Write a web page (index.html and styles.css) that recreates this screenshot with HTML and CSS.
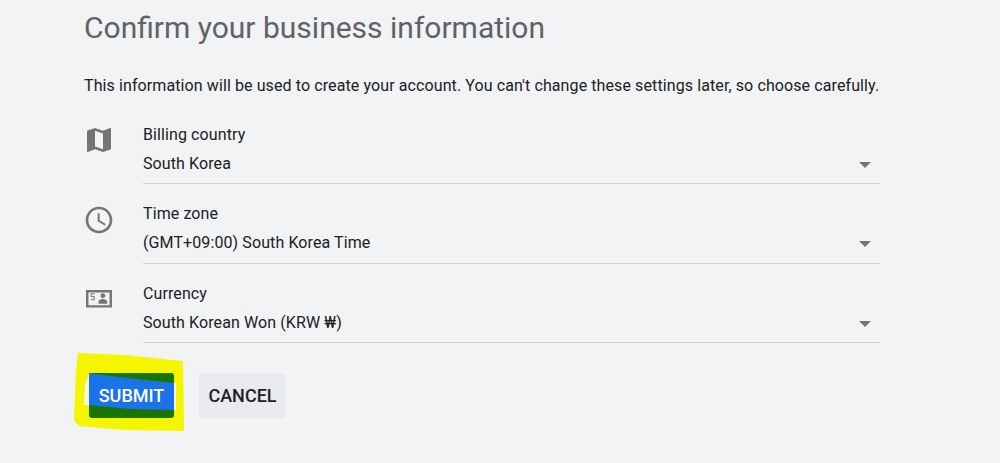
FILE: index.html
```html
<!DOCTYPE html>
<html lang="en">
<head>
<meta charset="utf-8">
<title>Confirm your business information</title>
<link rel="stylesheet" href="styles.css">
</head>
<body>
<main class="page">
  <h1 class="title">Confirm your business information</h1>
  <p class="intro">This information will be used to create your account. You can't change these settings later, so choose carefully.</p>
  <div class="rows">
    <div class="row">
      <svg class="icon" viewBox="0 0 24 24"><path d="M20.5 3l-.16.03L15 5.1 9 3 3.36 4.9c-.21.07-.36.25-.36.48V20.5c0 .28.22.5.5.5l.16-.03L9 18.9l6 2.1 5.64-1.9c.21-.07.36-.25.36-.48V3.5c0-.28-.22-.5-.5-.5zM15 19l-6-2.11V5l6 2.11V19z"/></svg>
      <div class="field">
        <div class="label">Billing country</div>
        <div class="value"><span>South Korea</span><i class="caret"></i></div>
      </div>
    </div>
    <div class="row">
      <svg class="icon" viewBox="0 0 24 24"><path d="M11.99 2C6.47 2 2 6.48 2 12s4.47 10 9.99 10C17.52 22 22 17.52 22 12S17.52 2 11.99 2zM12 20c-4.42 0-8-3.58-8-8s3.58-8 8-8 8 3.58 8 8-3.58 8-8 8zm.5-13H11v6l5.25 3.15.75-1.23-4.5-2.67z"/></svg>
      <div class="field">
        <div class="label">Time zone</div>
        <div class="value"><span>(GMT+09:00) South Korea Time</span><i class="caret"></i></div>
      </div>
    </div>
    <div class="row">
      <svg class="icon" viewBox="0 0 24 24"><path fill-rule="evenodd" d="M2.25 5.25h19.5v13.2H2.25zM4.1 7.1v9.5h15.8V7.1z"/><circle cx="14.9" cy="9.5" r="1.8"/><path d="M11.6 15.6v-1.5c0-1.4 2.2-2.1 3.3-2.1s3.3.7 3.3 2.1v1.5z"/><path class="icon-thin" d="M8.6 8.2H6.1v2h2.3v2.3H5.9"/></svg>
      <div class="field">
        <div class="label">Currency</div>
        <div class="value"><span>South Korean Won (KRW ₩)</span><i class="caret"></i></div>
      </div>
    </div>
  </div>
  <div class="actions">
    <div class="highlight">
      <svg class="marker" viewBox="74 353 110 78" aria-hidden="true">
        <polygon class="marker-yellow" points="78,353 125,355 183,361 184,431 125,430 103,428 79,426 74,421 76,370"/>
        <polygon class="marker-gap" points="89,374 85,385 84,405 89,405"/>
        <polygon class="marker-gap" points="174,383 176,383 176,410 174,410"/>
        <rect class="marker-green" x="89" y="373" width="85" height="45" rx="3"/>
        <polygon class="marker-blue" points="89,373 110,376 174,383 174,410 130,409 89,405"/>
      </svg>
      <button class="btn primary" type="button">SUBMIT</button>
    </div>
    <button class="btn secondary" type="button">CANCEL</button>
  </div>
</main>
</body>
</html>
```
FILE: styles.css
```css
html, body {
  margin: 0;
  height: 100%;
}
body {
  background: #f1f3f4;
  font-family: Roboto, "Liberation Sans", sans-serif;
  color: #202124;
  overflow: hidden;
}
.page {
  width: 796px;
  margin-left: 84px;
  padding-top: 11px;
}
.title {
  margin: 0;
  font-size: 30px;
  line-height: 34px;
  font-weight: 400;
  color: #5f6368;
}
.intro {
  margin: 25px 0 0;
  font-size: 16px;
  line-height: 32px;
  letter-spacing: 0.1px;
  white-space: nowrap;
}
.rows {
  display: flex;
  flex-direction: column;
  margin-top: 17.5px;
  gap: 15px;
}
.row {
  display: flex;
  align-items: flex-start;
}
.icon {
  width: 32px;
  height: 32px;
  margin-top: 4.5px;
  margin-left: -1px;
  fill: #757575;
  flex: none;
}
.icon-thin {
  fill: none;
  stroke: #8a8a8a;
  stroke-width: 0.9;
}
.field {
  flex: 1;
  margin-left: 28px;
  border-bottom: 1px solid #d1d3d5;
  height: 63.5px;
}
.label {
  font-size: 16px;
  line-height: 20px;
  letter-spacing: 0.1px;
  padding-top: 5px;
}
.value {
  display: flex;
  justify-content: space-between;
  align-items: center;
  font-size: 16px;
  line-height: 20px;
  letter-spacing: 0.1px;
  margin-top: 9px;
  padding-right: 9px;
}
.caret {
  width: 0;
  height: 0;
  border-left: 6.5px solid transparent;
  border-right: 6.5px solid transparent;
  border-top: 6.5px solid #757575;
  margin-top: 2px;
}
.actions {
  display: flex;
  align-items: center;
  gap: 25px;
  margin-top: 30px;
  margin-left: 5px;
}
.highlight {
  position: relative;
}
.marker {
  position: absolute;
  left: -15px;
  top: -20px;
  width: 110px;
  height: 78px;
}
.marker-yellow { fill: #f5f500; }
.marker-gap { fill: #f4f6f2; }
.marker-green { fill: #1a7500; }
.marker-blue { fill: #1a73e8; }
.btn {
  position: relative;
  display: block;
  height: 45px;
  padding: 0;
  border: 0;
  border-radius: 3px;
  font-family: inherit;
  font-size: 18px;
  font-weight: 500;
}
.primary {
  width: 85px;
  background: transparent;
  color: #fff;
}
.secondary {
  width: 87px;
  background: #e8eaed;
  color: #202124;
}
```
